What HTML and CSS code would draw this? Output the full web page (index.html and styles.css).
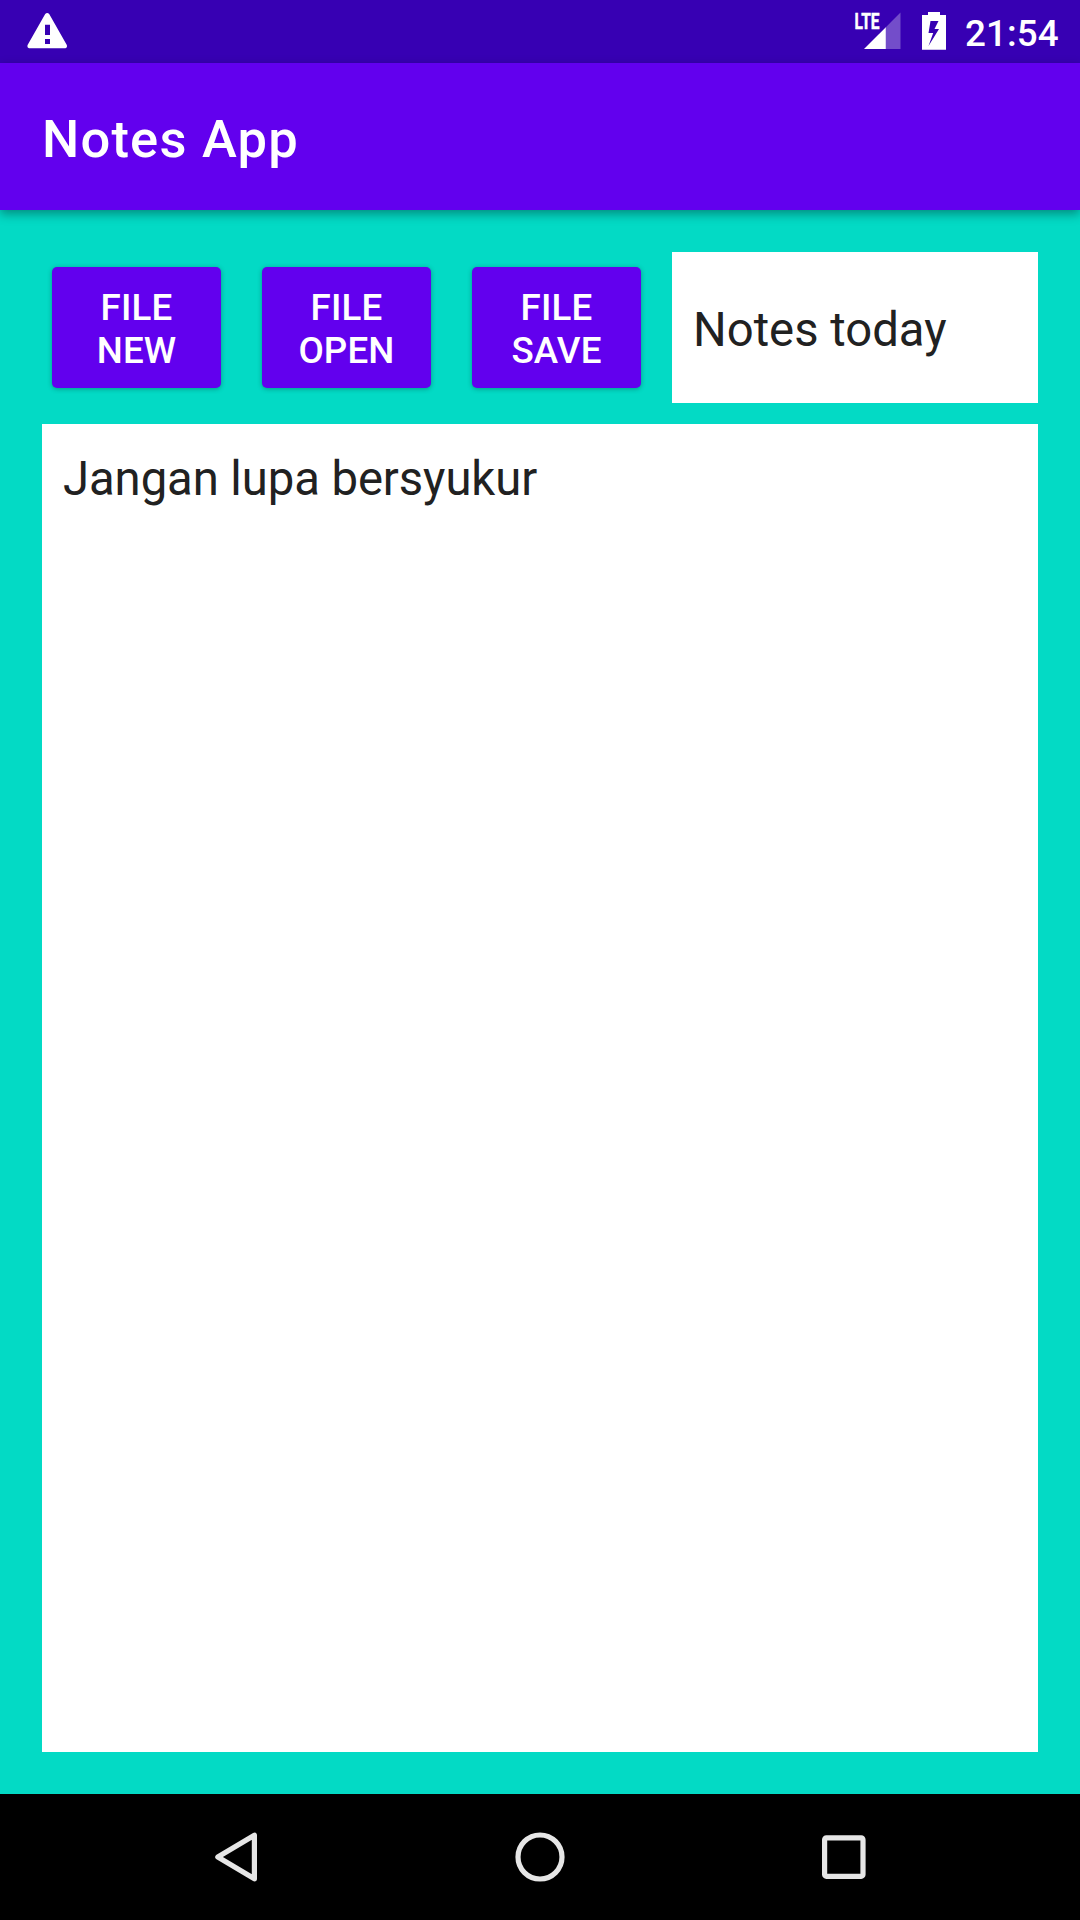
FILE: index.html
```html
<!DOCTYPE html>
<html lang="id">
<head>
<meta charset="utf-8">
<title>Notes App</title>
<link rel="stylesheet" href="styles.css">
</head>
<body>
<div class="screen">
  <div class="status-bar">
    <svg class="icon-warning" width="42" height="38" viewBox="0 0 42 38">
      <path fill="#fff" fill-rule="evenodd" d="M19.2 2Q21.2-.2 23.2 2L40.8 33Q41.6 35.7 39.5 36.3H3Q.8 35.7 1.6 33ZM19 12.7V23H24V12.7ZM19 27V32H24V27Z"/>
    </svg>
    <div class="status-icons">
      <svg class="icon-signal" width="48" height="38" viewBox="0 0 48 38">
        <text class="lte" x="-.5" y="17.2" textLength="25" lengthAdjust="spacingAndGlyphs">LTE</text>
        <path fill="#fff" fill-opacity=".3" d="M45.5 .6V37H30.8V15.3Z"/>
        <path fill="#fff" d="M30.8 15.3V37H9Z"/>
      </svg>
      <svg class="icon-battery" width="24" height="38" viewBox="0 0 24 38">
        <path fill="#fff" fill-rule="evenodd" d="M6 0H18V3H24V37.7H0V3H6ZM8.5 9L6.5 21H11.2L6.5 34L17 17H12.5L16.5 9Z"/>
      </svg>
      <span class="clock">21:54</span>
    </div>
  </div>
  <header class="app-bar"><h1 class="title">Notes App</h1></header>
  <main class="content">
    <div class="toolbar">
      <button class="button">FILE<br>NEW</button>
      <button class="button">FILE<br>OPEN</button>
      <button class="button">FILE<br>SAVE</button>
      <div class="file-name">Notes today</div>
    </div>
    <div class="editor">Jangan lupa bersyukur</div>
  </main>
  <nav class="nav-bar">
    <svg width="50" height="50" viewBox="0 0 50 50"><path d="M43.4 3.2V46.8L6.8 25Z"/></svg>
    <svg width="50" height="50" viewBox="0 0 50 50"><circle cx="25" cy="25" r="22"/></svg>
    <svg width="50" height="50" viewBox="0 0 50 50"><rect x="5.6" y="5.9" width="38.4" height="38.4" rx="1.8"/></svg>
  </nav>
</div>
</body>
</html>
```

FILE: styles.css
```css
* { box-sizing: border-box; }

body {
  margin: 0;
  font-family: Roboto, sans-serif;
}

.screen {
  width: 1080px;
  height: 1920px;
  display: flex;
  flex-direction: column;
  overflow: hidden;
  background: #03dac5;
}

.status-bar {
  height: 63px;
  padding: 12px 21px 0 26px;
  display: flex;
  justify-content: space-between;
  align-items: flex-start;
  background: #3700b3;
  color: #fff;
}

.status-icons {
  display: flex;
  align-items: flex-start;
}

.icon-signal {
  margin-right: 19px;
  overflow: visible;
}

.icon-battery { margin-right: 19px; }

.lte {
  font-size: 22.5px;
  font-weight: 700;
  fill: #fff;
  stroke: #fff;
  stroke-width: .5px;
}

.clock {
  width: 94px;
  font-size: 36.75px;
  font-weight: 500;
  line-height: 43px;
  letter-spacing: .1px;
  white-space: nowrap;
}

.app-bar {
  height: 147px;
  padding: 5px 42px 0;
  display: flex;
  align-items: center;
  background: #6200ee;
  box-shadow: 0 4px 10px rgba(0, 0, 0, .36);
}

.title {
  margin: 0;
  font-size: 52.5px;
  font-weight: 500;
  line-height: 61px;
  letter-spacing: 1.2px;
  color: #fff;
}

.content {
  flex: 1;
  padding: 42px;
  display: flex;
  flex-direction: column;
  gap: 21px;
}

.toolbar {
  height: 151px;
  padding-left: 10px;
  display: flex;
  align-items: center;
}

.button {
  width: 169px;
  height: 121px;
  margin: 0 41px 0 0;
  padding: 2px 0 0;
  border: 0;
  border-radius: 5px;
  background: #6200ee;
  box-shadow: 0 1px 5px rgba(0, 0, 0, .3);
  color: #fff;
  font: 500 36.75px/43px Roboto, sans-serif;
  letter-spacing: .15px;
}

.button:nth-of-type(3) { margin-right: 31px; }

.file-name {
  flex: 1;
  height: 151px;
  padding: 6px 21px 0;
  display: flex;
  align-items: center;
  background: #fff;
  color: #212121;
  font-size: 47.25px;
  line-height: 55px;
}

.editor {
  flex: 1;
  padding: 28px 21px;
  background: #fff;
  color: #212121;
  font-size: 47.25px;
  line-height: 55px;
  letter-spacing: -.08px;
}

.nav-bar {
  height: 126px;
  padding: 0 211px;
  display: flex;
  justify-content: space-between;
  align-items: center;
  background: #000;
}

.nav-bar svg {
  fill: none;
  stroke: #e6e6e6;
  stroke-width: 5.2;
  stroke-linejoin: round;
}
```
